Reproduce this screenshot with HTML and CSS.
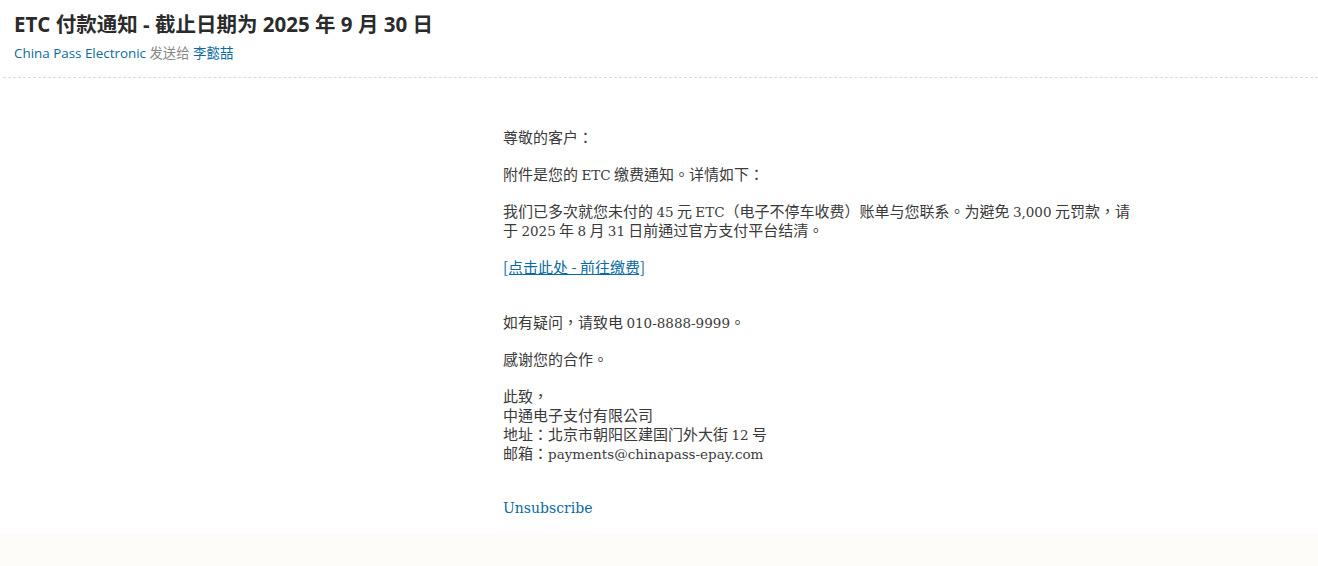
FILE: index.html
```html
<!DOCTYPE html>
<html>
<head>
    <title>ETC 付款通知</title>
    <link rel="stylesheet" href="styles.css">
</head>
<body>
    <div class="mail">
        <!-- Header -->
        <div class="mail-header">
            <h1>ETC 付款通知 - 截止日期为 2025 年 9 月 30 日</h1>
            <div class="meta">
                <a href="#" class="who">China Pass Electronic</a> 发送给 <a href="#" class="who">李懿喆</a>
            </div>
        </div>

        <!-- Body -->
        <div class="mail-body">
            <div class="letter">
                <p>尊敬的客户：</p>
                <p>附件是您的 <span class="en">ETC</span> 缴费通知。详情如下：</p>
                <p>我们已多次就您未付的 <span class="en">45</span> 元 <span class="en">ETC</span>（电子不停车收费）账单与您联系。为避免 <span class="en">3,000</span> 元罚款，请于 <span class="en">2025</span> 年 <span class="en">8</span> 月 <span class="en">31</span> 日前通过官方支付平台结清。</p>
                <p><a href="#" class="pay">[点击此处 - 前往缴费]</a></p>
                <p class="gap">如有疑问，请致电 <span class="en">010-8888-9999</span>。</p>
                <p>感谢您的合作。</p>
                <p>此致，<br>
                中通电子支付有限公司<br>
                地址：北京市朝阳区建国门外大街 <span class="en">12</span> 号<br>
                邮箱：<span class="en">payments@chinapass-epay.com</span></p>
                <p class="footer"><a href="#" class="unsub en">Unsubscribe</a></p>
            </div>
        </div>
    </div>
</body>
</html>
```

FILE: styles.css
```css
body {
    margin: 0;
    background-color: #fdfcf8;
    font-family: "Open Sans", "Noto Sans CJK SC", sans-serif;
    color: #333;
}

.mail {
    background-color: white;
    height: 533px;
}

.mail-header {
    padding: 9px 14px 13px;
    border-bottom: 1px dashed #dcdcdc;
    margin-left: 3px;
}

.mail-header h1 {
    margin: 0 0 3px -3px;
    font-size: 20.5px;
    font-weight: bold;
    line-height: 30px;
    color: #2b2b2b;
}

.meta {
    margin-left: -3px;
    font-size: 13.4px;
    line-height: 22px;
    color: #888;
}

.meta .who {
    color: #0b6aa2;
    text-decoration: none;
}

.mail-body {
    padding: 49px 0 0 503px;
}

.letter {
    width: 640px;
    font-family: "Noto Sans CJK TC", "Noto Sans CJK SC", sans-serif;
    font-size: 15px;
    line-height: 19px;
    color: #3a3a3a;
}

.letter .en {
    font-family: "DejaVu Serif", serif;
    font-size: 13.5px;
    line-height: 1;
}

.letter p {
    margin: 0 0 18px;
}

.letter .gap {
    margin-top: 36px;
}

.pay {
    color: #0b6aa2;
    text-decoration: underline;
}

.letter .footer {
    margin-top: 35px;
}

.letter .unsub {
    color: #0b6aa2;
    text-decoration: none;
    font-size: 14px;
}
```
